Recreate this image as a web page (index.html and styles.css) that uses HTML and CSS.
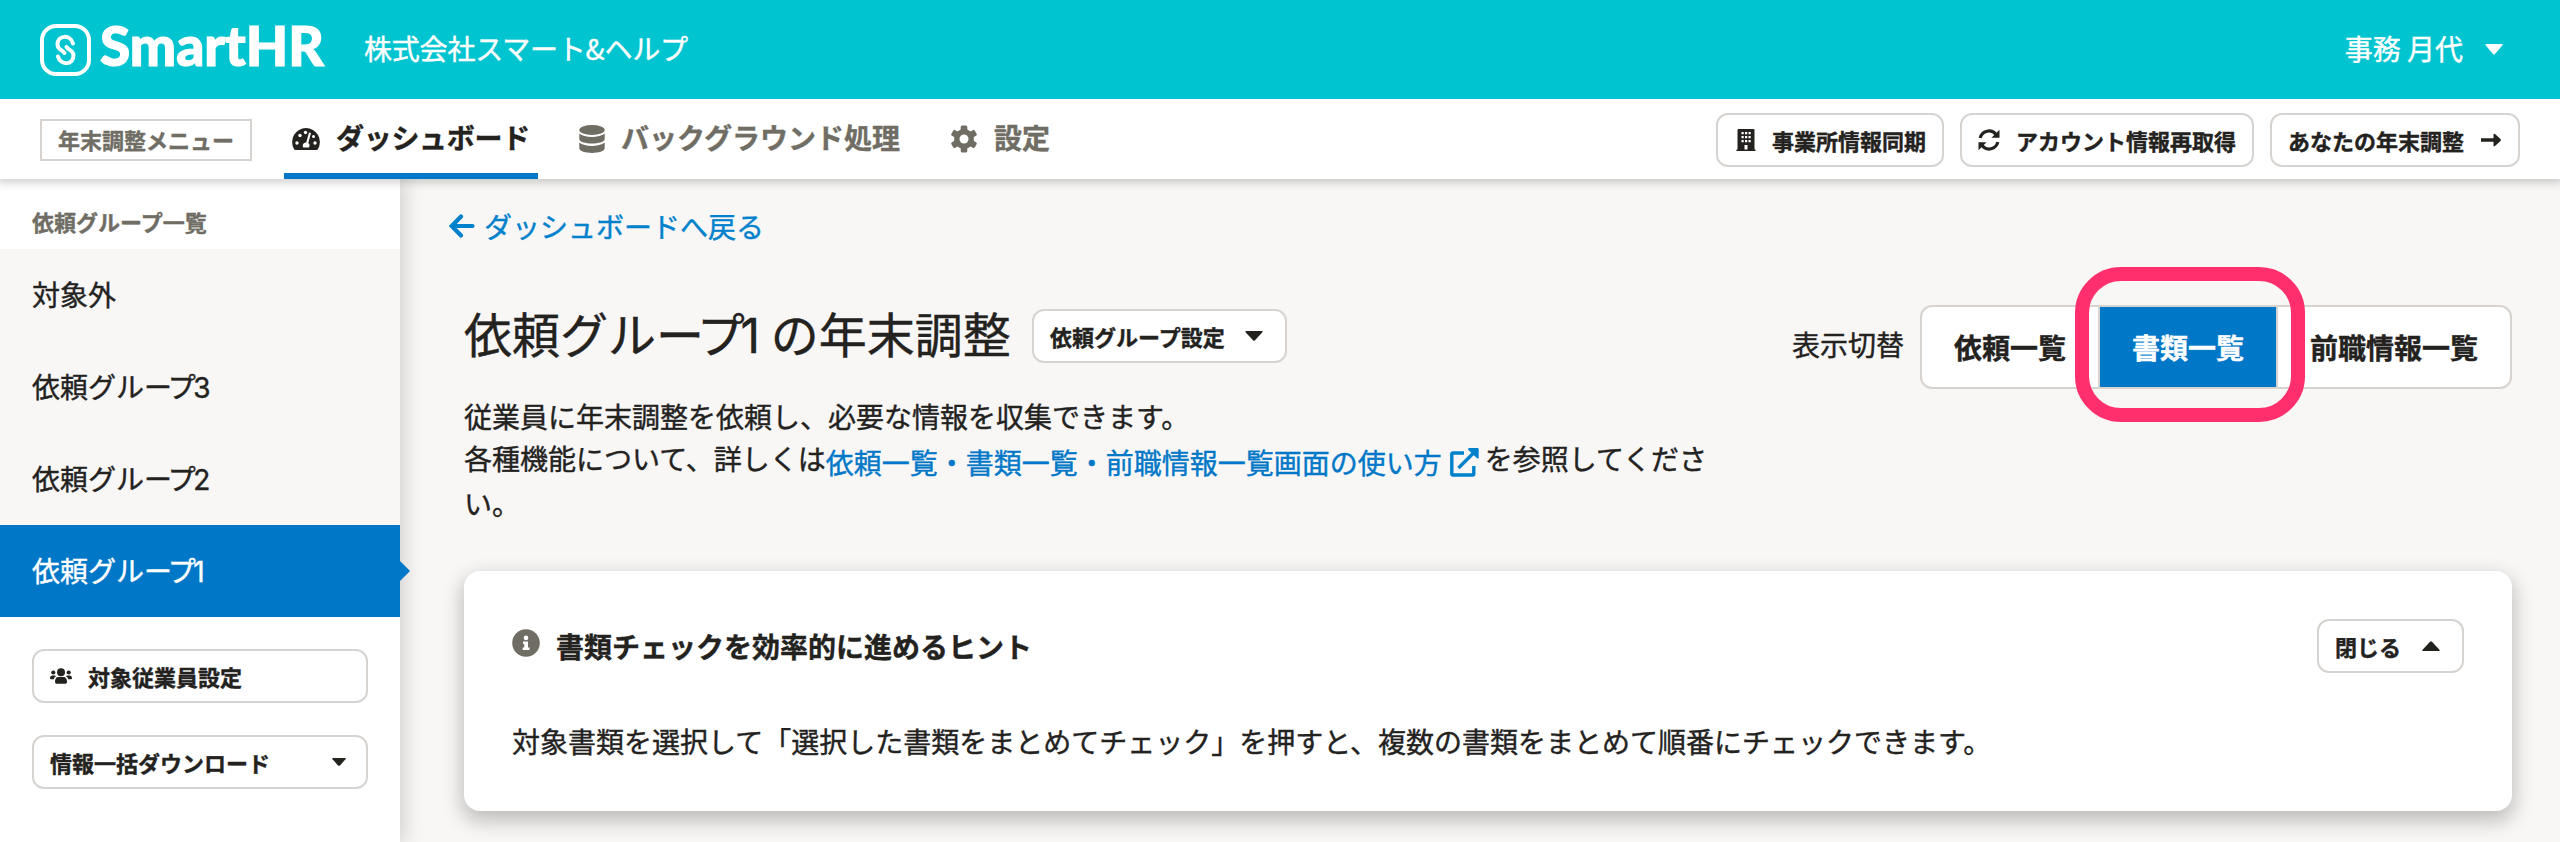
FILE: index.html
```html
<!DOCTYPE html>
<html lang="ja">
<head>
<meta charset="utf-8">
<title>SmartHR 年末調整</title>
<link rel="stylesheet" href="styles.css">
</head>
<body>
<header class="header">
  <div class="brand">
    <svg class="brand-mark" width="51" height="52" viewBox="0 0 51 52" fill="none" stroke="#fff"><rect x="2" y="2" width="47" height="48" rx="14" stroke-width="4"/><path d="M33 19.500C30.500 10 17.500 11 17.500 20.500C17.500 26 22.500 25.500 24.500 29M18 32.500C20.500 42 33.500 41 33.500 31.500C33.500 26 28.500 26.500 26.500 23" stroke-width="4" stroke-linecap="round"/></svg>
    <svg class="brand-name" width="226" height="72" viewBox="0 0 226 72"><text x="0" y="52" textLength="224" lengthAdjust="spacingAndGlyphs" fill="#fff" stroke="#fff" stroke-width="1.200">SmartHR</text></svg>
  </div>
  <span class="company">株式会社スマート&amp;ヘルプ</span>
  <div class="user"><span class="user-name">事務 月代</span><svg width="18" height="11" viewBox="0 0 18 11"><path d="M1.500 0h15q2 0 .7 1.500L10 10q-1 1-2 0L.8 1.500Q-.5 0 1.500 0z" fill="#fff"/></svg></div>
</header>
<nav class="nav">
  <span class="menu-label">年末調整メニュー</span>
  <a class="tab tab-active"><svg width="28" height="22" viewBox="0 0 28 22"><path d="M14 0A14 14 0 0 0 2 21q.5 1 1.500 1h21q1 0 1.500-1A14 14 0 0 0 14 0z" fill="#23221e"/><g fill="#fff"><circle cx="8" cy="7.500" r="1.700"/><circle cx="13.500" cy="4.500" r="1.700"/><circle cx="5" cy="15" r="1.700"/><circle cx="23" cy="15" r="1.700"/><circle cx="21.500" cy="8.500" r="1.500"/><path d="M17 4.500l2 .6-2.700 9.900a3.300 3.300 0 0 1 .5 4.500h-5.600a3.300 3.300 0 0 1 3-5.100z"/></g></svg><span class="tab-text">ダッシュボード</span></a>
  <a class="tab tab-jobs"><svg width="26" height="28" viewBox="0 0 26 28" fill="#706d65"><ellipse cx="13" cy="5" rx="12.700" ry="5"/><path d="M.3 8.500c5 4.500 20 4.500 25.400 0V14c0 6-25.400 6-25.400 0z"/><path d="M.3 17.500c5 4.500 20 4.500 25.400 0V23c0 6.500-25.400 6.500-25.400 0z"/></svg><span class="tab-text">バックグラウンド処理</span></a>
  <a class="tab tab-settings"><svg width="28" height="28" viewBox="0 0 28 28"><g fill="#706d65"><circle cx="14" cy="14" r="10"/><rect x="10.700" y=".5" width="6.600" height="27" rx="1.500"/><rect x="10.700" y=".5" width="6.600" height="27" rx="1.500" transform="rotate(60 14 14)"/><rect x="10.700" y=".5" width="6.600" height="27" rx="1.500" transform="rotate(120 14 14)"/></g><circle cx="14" cy="14" r="4.500" fill="#fff"/></svg><span class="tab-text">設定</span></a>
  <div class="nav-actions">
    <button class="btn"><svg class="i-building" width="20" height="22" viewBox="0 0 20 22"><path d="M2.500 0h15q1 0 1 1v19.500h1V22H.5v-1.500h1V1q0-1 1-1z" fill="#23221e"/><path d="M5.500 3h2.200v2.300H5.500zm3.500 0h2.200v2.300H9zm3.500 0h2.200v2.300h-2.200zM5.500 7h2.200v2.300H5.500zM9 7h2.200v2.300H9zm3.500 0h2.200v2.300h-2.200zM5.500 11h2.200v2.300H5.500zM9 11h2.200v2.300H9zm3.500 0h2.200v2.300h-2.200zM8.500 16h3v4.500h-3z" fill="#fff"/></svg>事業所情報同期</button>
    <button class="btn"><svg class="i-sync" width="22" height="22" viewBox="0 0 22 22"><path d="M2.200 9a9 9 0 0 1 15.800-3.600M19.800 13a9 9 0 0 1-15.800 3.600" fill="none" stroke="#23221e" stroke-width="3.200"/><path d="M21.500.8v8h-8zM.5 21.200v-8h8z" fill="#23221e"/></svg>アカウント情報再取得</button>
    <button class="btn">あなたの年末調整<svg class="i-next" width="20" height="14" viewBox="0 0 20 14"><path d="M0 5.200h12.500V1.300q.5-1 1.500-.3l5.500 5q.7 1 0 2L14 13q-1 .7-1.500-.3V8.800H0z" fill="#23221e"/></svg></button>
  </div>
</nav>
<div class="body">
  <aside class="side">
    <h2 class="side-title">依頼グループ一覧</h2>
    <ul class="groups">
      <li class="group">対象外</li>
      <li class="group">依頼グル<span class="tight">ープ</span><span class="num">3</span></li>
      <li class="group">依頼グル<span class="tight">ープ</span><span class="num">2</span></li>
      <li class="group group-active">依頼グル<span class="tight">ープ</span><span class="num">1</span></li>
    </ul>
    <div class="side-actions">
      <button class="btn"><svg class="i-users" width="22" height="16" viewBox="0 0 22 16" fill="#23221e"><circle cx="11" cy="4.300" r="4"/><circle cx="3.300" cy="4.500" r="2.100"/><circle cx="18.700" cy="4.500" r="2.100"/><path d="M5 14c0-3 1-5 3.500-5h5c2.500 0 3.500 2 3.500 5q0 1.700-1.500 1.700h-9Q5 15.700 5 14zM0 10q0-2.500 2.200-2.500h2.300q1 0 1.500.7Q4 9.300 3.800 11.300H1Q0 11.300 0 10zM22 10q0-2.500-2.200-2.500h-2.300q-1 0-1.500.7 2 1.100 2.200 3.100H21q1 0 1-1.300z"/></svg>対象従業員設定</button>
      <button class="btn">情報一括ダウンロード<svg class="i-end" width="14" height="8" viewBox="0 0 14 8"><path d="M1 0h12q1.500 0 .5 1.200L8 7.400q-1 .9-2 0L.5 1.200Q-.5 0 1 0z" fill="#23221e"/></svg></button>
    </div>
  </aside>
  <main class="main">
    <a class="back"><svg width="26" height="24" viewBox="0 0 26 24" fill="none" stroke="#0081cc" stroke-width="4.200" stroke-linecap="round"><path d="M12 2.500L2.800 12l9.200 9.500M3.500 12H23.500"/></svg>ダッシュボードへ戻る</a>
    <div class="title-row">
      <div class="intro">
        <div class="heading">
          <h1 class="title">依頼グル<span class="tight">ープ</span><span class="num">1</span> の年末調整</h1>
          <button class="btn">依頼グループ設定<svg class="i-down" width="18" height="10" viewBox="0 0 18 10"><path d="M1.500 0h15q2 0 .7 1.500L10 9.200q-1 1-2 0L.8 1.500Q-.5 0 1.500 0z" fill="#23221e"/></svg></button>
        </div>
        <p class="line">従業員に年末調整を依頼し、必要な情報を収集できます。</p>
        <p class="line line-link">各種機能について、詳しくは<a class="help">依頼一覧・書類一覧・前職情報一覧画面の使い方<svg width="29" height="29" viewBox="0 0 29 29"><path d="M14 5H3q-1.200 0-1.200 1.200v19.600Q1.800 27 3 27h19.600q1.200 0 1.200-1.200V18M8.500 20L24 4.500" fill="none" stroke="#0081cc" stroke-width="3.400"/><path d="M19 0h8.500q1.200 0 1.200 1.200V10q-1 1-2 0l-8.500-8.300Q17.800.5 19 0z" fill="#0081cc"/></svg></a>を参照してくださ</p>
        <p class="line line-last">い。</p>
      </div>
      <div class="switcher">
        <span class="switch-label">表示切替</span>
        <div class="segments">
          <button class="seg">依頼一覧</button>
          <button class="seg seg-on">書類一覧<span class="callout"></span></button>
          <button class="seg seg-last">前職情報一覧</button>
        </div>
      </div>
    </div>
    <section class="card">
      <div class="card-head">
        <svg class="i-info" width="28" height="28" viewBox="0 0 28 28"><circle cx="14" cy="14" r="13.800" fill="#706d65"/><path d="M14 6.600a2.300 2.300 0 1 1 0 4.600 2.300 2.300 0 0 1 0-4.600zM11 12.500h5V18.500h1.500V21h-6.800v-2.500h1.500V15H11z" fill="#fff"/></svg>
        <h3 class="card-title">書類チェックを効率的に進めるヒント</h3>
        <button class="btn">閉じる<svg class="i-up" width="18" height="10" viewBox="0 0 18 10"><path d="M1.500 10h15q2 0 .7-1.500L10 .8Q9-.2 8 .8L.8 8.500Q-.5 10 1.500 10z" fill="#23221e"/></svg></button>
      </div>
      <p class="card-text">対象書類を選択して「選択した書類をまとめてチェック」を押すと、複数の書類をまとめて順番にチェックできます。</p>
    </section>
  </main>
</div>
</body>
</html>
```
FILE: styles.css
```css
* { box-sizing: border-box; margin: 0; padding: 0; }
body {
  width: 2560px; height: 842px; overflow: hidden;
  display: flex; flex-direction: column;
  background: #f8f7f6; color: #23221e;
  font: 28px/42px "Noto Sans CJK JP", sans-serif;
  -webkit-text-stroke: .4px currentColor;
  white-space: nowrap;
}
svg { flex: none; display: block; }
.header { height: 99px; flex: none; display: flex; align-items: center; padding: 0 57px 0 40px; background: #00c4cf; color: #fff; }
.brand { display: flex; align-items: center; width: 324px; }
.brand-name { margin-left: 9px; overflow: visible; font: 900 56px/60px Lato, sans-serif; -webkit-text-stroke: 1.2px #fff; }
.company, .user-name { padding-bottom: 4px; }
.company { letter-spacing: -.2px; }
.user { margin-left: auto; display: flex; align-items: center; gap: 22px; }

.nav { position: relative; z-index: 3; height: 80px; flex: none; display: flex; padding: 0 40px; background: #fff; box-shadow: 0 2px 8px 2px rgba(0,0,0,.18); clip-path: inset(0 0 -30px 0); }
.menu-label { width: 212px; height: 42px; margin: 20px 32px 0 0; border: 2px solid #d6d3d0; text-align: center; font-weight: 700; font-size: 22px; line-height: 37px; color: #706d65; }
.tab { display: flex; align-items: center; height: 80px; padding-top: 5px; font-weight: 700; color: #706d65; }
.tab svg { margin-right: 16px; }
.tab-text { padding-bottom: 3px; }
.tab-active { width: 254px; padding-left: 8px; border-bottom: 6px solid #0077c7; color: #23221e; }
.tab-active .tab-text { letter-spacing: -.3px; }
.tab-jobs, .tab-settings { padding-bottom: 6px; }
.tab-jobs { margin-left: 41px; width: 371px; }
.nav-actions { margin-left: auto; display: flex; gap: 16px; padding-top: 14px; }
.btn { display: flex; align-items: center; height: 54px; padding: 0 16px; background: #fff; border: 2px solid #d6d3d0; border-radius: 12px; font: 700 22px/32px "Noto Sans CJK JP", sans-serif; color: #23221e; -webkit-text-stroke: .4px currentColor; }
.i-building { margin: 0 16px 0 2px; }
.i-sync { margin-right: 16px; }
.i-next { margin: 0 1px 0 17px; }

.body { display: flex; flex: 1; min-height: 0; }
.side { position: relative; z-index: 2; width: 400px; flex: none; background: #fff; box-shadow: 2px 0 20px 2px rgba(0,0,0,.16); }
.side-title { height: 70px; padding: 26px 32px 0; font-size: 22px; line-height: 32px; color: #706d65; }
.groups { list-style: none; background: #f8f7f6; }
.group { height: 92px; padding: 0 32px; line-height: 90px; }
.group-active { position: relative; background: #0077c7; color: #fff; }
.group-active::after { content: ""; position: absolute; left: 400px; top: 36px; border: 10px solid transparent; border-left-color: #0077c7; border-right: 0; }
.tight { letter-spacing: -.09em; }
.num { font-family: Inter, sans-serif; }
.side-actions { display: flex; flex-direction: column; gap: 32px; padding: 32px; }
.i-users { margin-right: 16px; }
.i-end { margin-left: auto; margin-right: 4px; }

.main { flex: 1; min-width: 0; padding: 26px 48px 0 64px; }
.back { display: flex; align-items: center; margin-left: -15px; height: 42px; color: #0081cc; }
.back svg { margin-right: 9px; }
.title-row { display: flex; justify-content: space-between; margin-top: 50px; }
.heading { display: flex; align-items: center; gap: 16px; height: 78px; }
.title { width: 552px; padding-bottom: 5px; font-size: 48px; line-height: 72px; font-weight: 400; }
.i-down { margin: 0 6px 0 20px; }
.line { margin-top: 20px; height: 42px; }
.line-link { display: flex; margin-top: 0; }
.help { display: flex; align-items: center; position: relative; top: 4px; margin-right: 8px; color: #0077c7; }
.help svg { margin-left: 8px; margin-right: -2px; }
.line-last { margin-top: 3px; }
.switcher { display: flex; gap: 16px; padding-top: 8px; }
.switch-label { line-height: 78px; }
.segments { display: flex; height: 84px; border: 2px solid #d6d3d0; border-radius: 12px; background: #fff; }
.seg { border: 0; background: none; padding: 0 34px 0 32px; color: #23221e; font: 700 28px/42px "Noto Sans CJK JP", sans-serif; -webkit-text-stroke: .4px currentColor; }
.seg-on { position: relative; background: #0077c7; color: #fff; padding: 0 32px; box-shadow: -2px 0 #d6d3d0, 2px 0 #d6d3d0; }
.seg-last { padding: 0 32px 0 34px; }
.callout { position: absolute; left: -25px; top: -40px; width: 230px; height: 155px; border: 14px solid #ff2e6c; border-radius: 46px; z-index: 1; }

.card { height: 240px; margin-top: 47px; padding: 48px; border-radius: 16px; background: #fff; box-shadow: 0 8px 20px 2px rgba(0,0,0,.24); }
.card-head { display: flex; align-items: center; height: 54px; }
.i-info { margin-right: 16px; margin-top: -6px; }
.card-title { font-size: 28px; }
.card-head .btn { margin-left: auto; }
.i-up { margin: 0 6px 0 21px; }
.card-text { margin-top: 47px; }
```
